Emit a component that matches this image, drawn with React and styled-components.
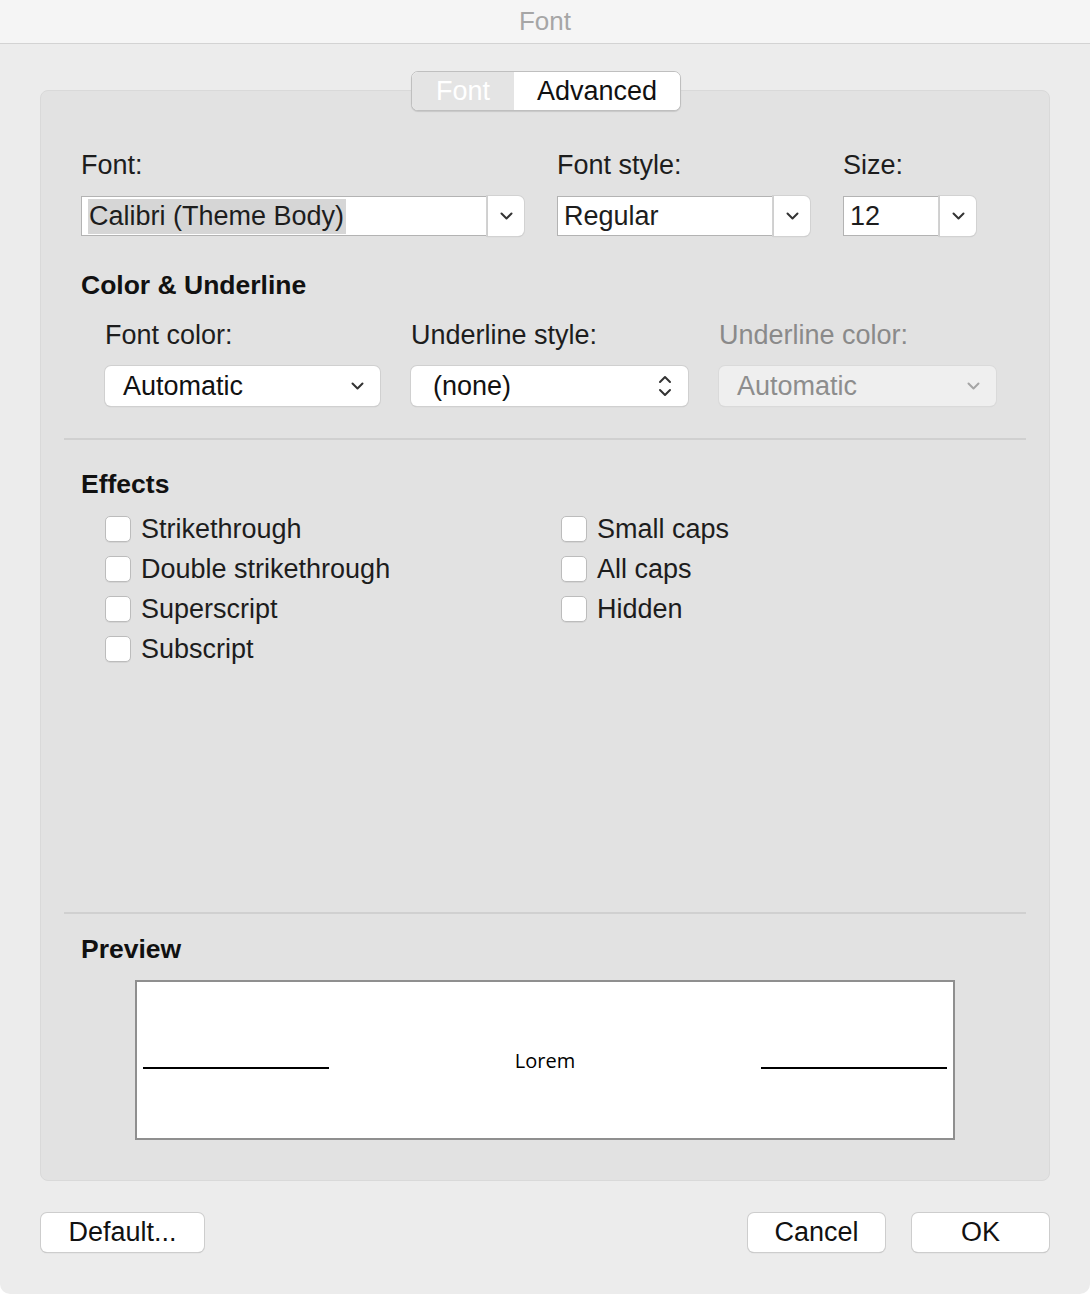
import React from 'react';
import styled, { createGlobalStyle } from 'styled-components';

const GlobalStyle = createGlobalStyle`
  html, body {
    margin: 0;
    padding: 0;
    background: #ffffff;
  }
  body {
    font-family: 'Liberation Sans', Arial, sans-serif;
    font-size: 27px;
    color: #1d1d1d;
  }
`

const Window = styled.div`
  width: 1090px;
  height: 1294px;
  background: #ececec;
  border-radius: 0 0 10px 10px;
  overflow: hidden;
  display: flex;
  flex-direction: column;
`

const TitleBar = styled.div`
  height: 44px;
  flex-shrink: 0;
  background: #f5f5f5;
  border-bottom: 1px solid #d3d3d3;
  display: flex;
  align-items: center;
  justify-content: center;
  color: #a6a6a6;
  font-size: 26px;
  box-sizing: border-box;
`

const Body = styled.div`
  padding: 46px 40px 0 40px;
  display: flex;
  flex-direction: column;
`

const Panel = styled.div`
  height: 1089px;
  background: #e2e2e2;
  border: 1px solid #d9d9d9;
  border-radius: 8px;
  padding: 0 23px;
  display: flex;
  flex-direction: column;
`

const TabsWrap = styled.div`
  display: flex;
  justify-content: center;
  margin-top: -20px;
  margin-left: 2px;
`

const Tabs = styled.div`
  display: flex;
  height: 38px;
  border: 1px solid #bfbfbf;
  border-radius: 7px;
  overflow: hidden;
  box-shadow: 0 1px 1px rgba(0, 0, 0, 0.12);
  background: #fff;
`

const Tab = styled.div`
  width: ${p => p.$w}px;
  display: flex;
  align-items: center;
  justify-content: center;
  background: ${p => (p.$active ? '#e4e4e4' : '#ffffff')};
  color: ${p => (p.$active ? '#ffffff' : '#111')};
  line-height: 1;
`

const Section = styled.div`
  padding: 0 17px;
`

const Label = styled.div`
  height: 30px;
  line-height: 30px;
  color: ${p => (p.$disabled ? '#8a8a8a' : '#1d1d1d')};
  white-space: nowrap;
`

const Heading = styled.div`
  height: 30px;
  line-height: 30px;
  font-weight: 700;
  font-size: 26.5px;
  color: #111;
`

const FontGrid = styled.div`
  display: grid;
  grid-template-columns: 443px 253px 133px;
  column-gap: 33px;
  row-gap: 16px;
  margin-top: 39px;
`

const Combo = styled.div`
  display: flex;
  height: 40px;
`

const ComboField = styled.div`
  flex: 1;
  background: #fff;
  border: 1px solid #b3b3b3;
  border-right: none;
  display: flex;
  align-items: center;
  padding-left: 6px;
  overflow: hidden;
  white-space: nowrap;
`

const Selected = styled.span`
  background: #d6d6d6;
  padding: 2px 2px 2px 1px;
`

const ComboButton = styled.div`
  width: 36px;
  background: #fff;
  border-left: 1px solid #cfcfcf;
  border-radius: 0 6px 6px 0;
  box-shadow: 0 0 0 1px #d2d2d2, 0 1px 1px 0 #bcbcbc;
  display: flex;
  align-items: center;
  justify-content: center;
`

const ColorGrid = styled.div`
  display: grid;
  grid-template-columns: 275px 277px 277px;
  column-gap: 31px;
  row-gap: 16px;
  padding-left: 24px;
  margin-top: 20px;
`

const Popup = styled.div`
  height: 40px;
  box-sizing: border-box;
  border-radius: 6px;
  background: ${p => (p.$disabled ? '#efefef' : '#fff')};
  color: ${p => (p.$disabled ? '#8d8d8d' : '#111')};
  box-shadow: 0 0 0 1px ${p => (p.$disabled ? '#dadada' : '#d0d0d0')}, 0 1px 1px 0 ${p => (p.$disabled ? '#cfcfcf' : '#b5b5b5')};
  display: flex;
  align-items: center;
  justify-content: space-between;
  padding: 0 16px 0 ${p => p.$pad || 18}px;
`

const Divider = styled.div`
  height: 2px;
  background: #d0d0d0;
  margin-top: ${p => p.$top}px;
`

const Effects = styled.div`
  display: grid;
  grid-template-columns: 456px 1fr;
  grid-auto-flow: column;
  grid-template-rows: repeat(4, 40px);
  padding-left: 24px;
  margin-top: 10px;
`

const CheckRow = styled.label`
  display: flex;
  align-items: center;
  gap: 10px;
  white-space: nowrap;
`

const Box = styled.span`
  width: 26px;
  height: 26px;
  box-sizing: border-box;
  background: #fff;
  border: 1px solid #bcbcbc;
  border-radius: 5px;
  box-shadow: 0 1px 0 rgba(0, 0, 0, 0.06);
  flex-shrink: 0;
`

const PreviewBox = styled.div`
  margin: 16px 0 0 54px;
  width: 820px;
  height: 160px;
  box-sizing: border-box;
  background: #fff;
  border: 2px solid #8f8f8f;
  display: flex;
  align-items: center;
  justify-content: space-between;
  padding: 0 6px;
`

const Rule = styled.div`
  width: 186px;
  height: 2px;
  background: #000;
  margin-top: 16px;
`

const Lorem = styled.div`
  font-family: 'Open Sans', 'Liberation Sans', sans-serif;
  font-size: 20px;
  color: #000;
`

const Footer = styled.div`
  display: flex;
  align-items: center;
  gap: 27px;
  padding: 32px 41px 0 41px;
`

const Button = styled.div`
  width: ${p => p.$w}px;
  height: 39px;
  box-sizing: border-box;
  background: #fff;
  border-radius: 6px;
  box-shadow: 0 0 0 1px #cdcdcd, 0 1px 1px 0 #b0b0b0;
  display: flex;
  align-items: center;
  justify-content: center;
  color: #111;
  margin-left: ${p => (p.$push ? 'auto' : '0')};
`

const Chevron = ({ color = '#333' }) => (
  <svg width="13" height="8" viewBox="0 0 13 8">
    <path d="M1.5 1.5 L6.5 6.5 L11.5 1.5" fill="none" stroke={color} strokeWidth="2" strokeLinecap="round" strokeLinejoin="round" />
  </svg>
)

const UpDown = () => (
  <svg width="14" height="26" viewBox="0 0 14 26">
    <path d="M2 9 L7 4 L12 9" fill="none" stroke="#333" strokeWidth="2" strokeLinecap="round" strokeLinejoin="round" />
    <path d="M2 17 L7 22 L12 17" fill="none" stroke="#333" strokeWidth="2" strokeLinecap="round" strokeLinejoin="round" />
  </svg>
)

const left = ['Strikethrough', 'Double strikethrough', 'Superscript', 'Subscript'];
const right = ['Small caps', 'All caps', 'Hidden'];

const App = () => {
  return (
    <Window>
      <GlobalStyle />
      <TitleBar>Font</TitleBar>
      <Body>
        <Panel>
          <TabsWrap>
            <Tabs>
              <Tab $w={102} $active>Font</Tab>
              <Tab $w={166}>Advanced</Tab>
            </Tabs>
          </TabsWrap>

          <Section>
            <FontGrid>
              <Label>Font:</Label>
              <Label>Font style:</Label>
              <Label>Size:</Label>
              <Combo>
                <ComboField><Selected>Calibri (Theme Body)</Selected></ComboField>
                <ComboButton><Chevron /></ComboButton>
              </Combo>
              <Combo>
                <ComboField>Regular</ComboField>
                <ComboButton><Chevron /></ComboButton>
              </Combo>
              <Combo>
                <ComboField>12</ComboField>
                <ComboButton><Chevron /></ComboButton>
              </Combo>
            </FontGrid>

            <Heading style={{ marginTop: 34 }}>Color &amp; Underline</Heading>
            <ColorGrid>
              <Label>Font color:</Label>
              <Label>Underline style:</Label>
              <Label $disabled>Underline color:</Label>
              <Popup>
                <span>Automatic</span>
                <Chevron />
              </Popup>
              <Popup $pad={22}>
                <span>(none)</span>
                <UpDown />
              </Popup>
              <Popup $disabled>
                <span>Automatic</span>
                <Chevron color="#a5a5a5" />
              </Popup>
            </ColorGrid>
          </Section>

          <Divider $top={32} />

          <Section>
            <Heading style={{ marginTop: 29 }}>Effects</Heading>
            <Effects>
              {left.map(t => (
                <CheckRow key={t}><Box />{t}</CheckRow>
              ))}
              {right.map(t => (
                <CheckRow key={t}><Box />{t}</CheckRow>
              ))}
            </Effects>
          </Section>

          <Divider $top={243} />

          <Section>
            <Heading style={{ marginTop: 20 }}>Preview</Heading>
            <PreviewBox>
              <Rule />
              <Lorem>Lorem</Lorem>
              <Rule />
            </PreviewBox>
          </Section>
        </Panel>
      </Body>
      <Footer>
        <Button $w={163}>Default...</Button>
        <Button $w={137} $push>Cancel</Button>
        <Button $w={137}>OK</Button>
      </Footer>
    </Window>
  )
}

export default App;
